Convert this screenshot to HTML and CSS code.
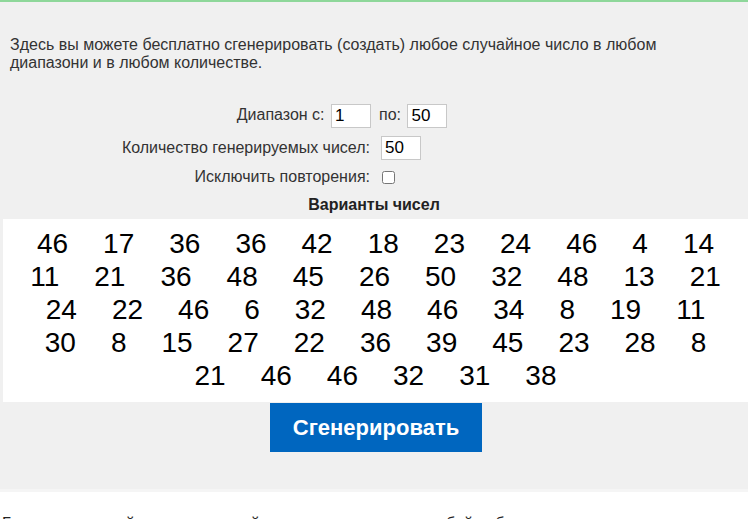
FILE: index.html
```
<!DOCTYPE html>
<html lang="ru">
<head>
    <meta charset="UTF-8">
    <meta name="viewport" content="width=device-width, initial-scale=1.0">
    <title>Генератор случайных чисел</title>
    <link rel="stylesheet" href="styles.css">
</head>
<body>
    <div class="generator">
        <p class="intro">Здесь вы можете бесплатно сгенерировать (создать) любое случайное число в любом диапазони и в любом количестве.</p>

        <div class="form">
            <div class="label">Диапазон с: <input type="text" class="num" value="1"></div>
            <div class="field">по: <input type="text" class="num" value="50"></div>

            <div class="label">Количество генерируемых чисел:</div>
            <div class="field"><input type="text" class="num" value="50"></div>

            <div class="label">Исключить повторения:</div>
            <div class="field"><input type="checkbox" class="check"></div>
        </div>

        <div class="title">Варианты чисел</div>

        <div class="result">
            <div class="row"><span>46</span><span>17</span><span>36</span><span>36</span><span>42</span><span>18</span><span>23</span><span>24</span><span>46</span><span>4</span><span>14</span></div>
            <div class="row"><span>11</span><span>21</span><span>36</span><span>48</span><span>45</span><span>26</span><span>50</span><span>32</span><span>48</span><span>13</span><span>21</span></div>
            <div class="row"><span>24</span><span>22</span><span>46</span><span>6</span><span>32</span><span>48</span><span>46</span><span>34</span><span>8</span><span>19</span><span>11</span></div>
            <div class="row"><span>30</span><span>8</span><span>15</span><span>27</span><span>22</span><span>36</span><span>39</span><span>45</span><span>23</span><span>28</span><span>8</span></div>
            <div class="row"><span>21</span><span>46</span><span>46</span><span>32</span><span>31</span><span>38</span></div>
        </div>

        <div class="actions">
            <button class="btn">Сгенерировать</button>
        </div>
    </div>

    <p class="about">Генератор случайных чисел онлайн позволяет получить любой набор чисел в заданном диапазоне.</p>
</body>
</html>
```
FILE: styles.css
```
body {
    font-family: "Liberation Sans", Arial, sans-serif;
    color: #222;
    background: #fff;
    margin: 0;
    padding: 0;
}
.generator {
    background-color: #f0f0f0;
    border-top: 2px solid #8ed79a;
    border-bottom: 3px solid #f5f5f5;
    padding: 34px 0 37px;
}
.intro {
    margin: 0 0 32px;
    padding: 0 10px;
    font-size: 16px;
    line-height: 18px;
    color: #333;
}
.form {
    display: grid;
    grid-template-columns: 370px 1fr;
    column-gap: 9px;
    row-gap: 8px;
    font-size: 16px;
    color: #333;
    align-items: center;
}
.label {
    text-align: right;
}
.field {
    text-align: left;
}
.num {
    width: 40px;
    height: 24px;
    box-sizing: border-box;
    border: 1px solid #c8c8c8;
    padding: 0 3px;
    font-family: "Liberation Sans", Arial, sans-serif;
    font-size: 17px;
    color: #000;
    vertical-align: middle;
    margin: 0 2px;
}
.label .num {
    margin-right: -1px;
}
.check {
    width: 13px;
    height: 13px;
    margin: 0 0 0 3px;
    vertical-align: middle;
}
.title {
    text-align: center;
    font-weight: bold;
    font-size: 16px;
    line-height: 18px;
    margin: 10px 0 5px;
    color: #222;
}
.result {
    background: #fff;
    margin-left: 3px;
    padding: 8px 0 10px;
    text-align: center;
    font-size: 28px;
    line-height: 33px;
    color: #000;
}
.result span {
    margin: 0 17.5px;
}
.actions {
    text-align: center;
    padding: 1px 0 0 4px;
}
.btn {
    background-color: #0066bf;
    color: #fff;
    border: none;
    width: 212px;
    height: 49px;
    font-family: "Liberation Sans", Arial, sans-serif;
    font-size: 22px;
    font-weight: bold;
    cursor: pointer;
}
.btn:hover {
    background-color: #0056a3;
}
.about {
    margin: 23px 0 0 2px;
    font-size: 16px;
}
```
